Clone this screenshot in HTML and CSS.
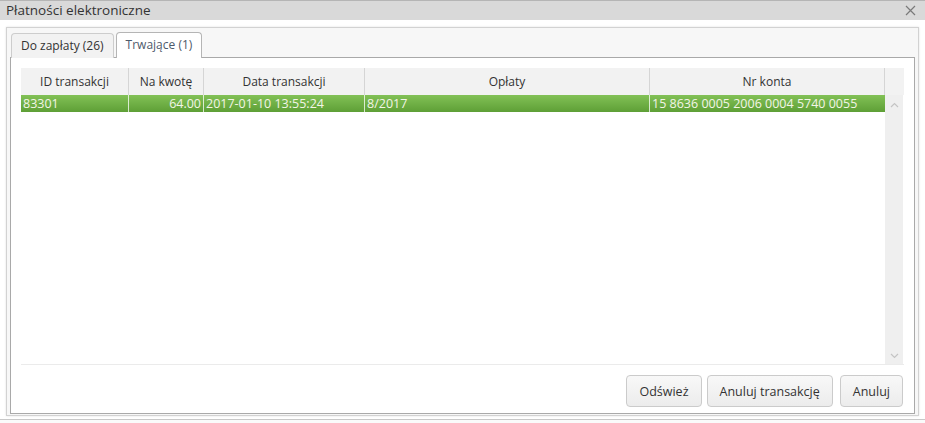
FILE: index.html
```html
<!DOCTYPE html>
<html lang="pl">
<head>
<meta charset="utf-8">
<title>Płatności elektroniczne</title>
<link rel="stylesheet" href="styles.css">
</head>
<body>
<div class="window">
  <div class="titlebar">
    <span class="title">Płatności elektroniczne</span>
    <svg class="close" width="11" height="11" viewBox="0 0 11 11"><path d="M1 1L10 10M10 1L1 10" stroke="#7a7a7a" stroke-width="1.2" fill="none"/></svg>
  </div>
  <div class="panel">
    <div class="tabs">
      <div class="tab">Do zapłaty (26)</div>
      <div class="tab active">Trwające (1)</div>
    </div>
    <div class="tabbody">
      <div class="grid">
        <div class="ghead">
          <div class="hc c1">ID transakcji</div>
          <div class="hc c2">Na kwotę</div>
          <div class="hc c3">Data transakcji</div>
          <div class="hc c4">Opłaty</div>
          <div class="hc c5">Nr konta</div>
          <div class="hc c6"></div>
        </div>
        <div class="gbody">
          <div class="rows">
            <div class="row sel">
              <div class="cell c1">83301</div>
              <div class="cell c2 num">64.00</div>
              <div class="cell c3">2017-01-10 13:55:24</div>
              <div class="cell c4">8/2017</div>
              <div class="cell c5">15 8636 0005 2006 0004 5740 0055</div>
            </div>
          </div>
          <div class="scroll">
            <svg width="9" height="6" viewBox="0 0 9 6"><path d="M1 5L4.5 1.5L8 5" stroke="#c4c4c4" stroke-width="1.2" fill="none"/></svg>
            <svg width="9" height="6" viewBox="0 0 9 6"><path d="M1 1L4.5 4.5L8 1" stroke="#c4c4c4" stroke-width="1.2" fill="none"/></svg>
          </div>
        </div>
      </div>
      <div class="buttons">
        <button class="btn">Odśwież</button>
        <button class="btn">Anuluj transakcję</button>
        <button class="btn">Anuluj</button>
      </div>
    </div>
  </div>
</div>
</body>
</html>
```
FILE: styles.css
```css
html, body {
  margin: 0;
  padding: 0;
}
body {
  width: 925px;
  height: 423px;
  overflow: hidden;
  background: #fafafa;
  font-family: "Open Sans", "Liberation Sans", sans-serif;
  color: #333;
}
.window {
  height: 419px;
  background: #fff;
  display: flex;
  flex-direction: column;
  border-bottom: 1px solid #c8c8c8;
}
.titlebar {
  height: 19px;
  background: #d9d9d9;
  border-top: 1px solid #b5b5b5;
  display: flex;
  align-items: center;
  justify-content: space-between;
  padding: 0 9px 0 6px;
}
.title {
  font-size: 13.5px;
  color: #333;
  line-height: 19px;
}
.close {
  display: block;
}
.panel {
  margin: 7px 6px 4px 6px;
  flex: 1;
  border: 1px solid #d2d2d2;
  box-shadow: 0 0 2px rgba(0,0,0,0.12);
  background: #f7f7f7;
  display: flex;
  flex-direction: column;
  padding: 0 3px 1px 3px;
}
.tabs {
  height: 29px;
  display: flex;
  align-items: flex-end;
  gap: 2px;
  padding-left: 1px;
}
.tab {
  height: 24px;
  line-height: 24px;
  padding: 0 9px;
  font-size: 12px;
  color: #333;
  background: #f2f2f2;
  border: 1px solid #cdcdcd;
  border-bottom: none;
  border-radius: 4px 4px 0 0;
  position: relative;
  top: 1px;
}
.tab.active {
  background: #fff;
  border-color: #b5b5b5;
  color: #4d5a6b;
  height: 25px;
  z-index: 1;
}
.tabbody {
  flex: 1;
  background: #fff;
  border: 1px solid #a9a9a9;
  display: flex;
  flex-direction: column;
  padding: 10px 10px 6px 10px;
}
.grid {
  height: 296px;
  display: flex;
  flex-direction: column;
  border-bottom: 1px solid #ebebeb;
}
.ghead {
  height: 27px;
  display: flex;
  background: #f2f2f2;
}
.hc {
  font-size: 12px;
  line-height: 27px;
  text-align: center;
  border-right: 1px solid #d5d5d5;
  color: #333;
  box-sizing: border-box;
}
.hc.c6 { border-right: none; }
.c1 { width: 108px; }
.c2 { width: 75px; }
.c3 { width: 161px; }
.c4 { width: 285px; }
.c5 { width: 235px; }
.c6 { width: 18px; }
.gbody {
  flex: 1;
  display: flex;
}
.rows {
  width: 864px;
}
.row {
  height: 17px;
  display: flex;
}
.row.sel {
  background: linear-gradient(#82c156, #5e9f36);
}
.cell {
  font-size: 12.5px;
  line-height: 17px;
  color: #f3f5e6;
  padding: 0 2px 0 2px;
  box-sizing: border-box;
  border-right: 1px solid rgba(255,255,255,0.75);
  white-space: nowrap;
  overflow: hidden;
}
.cell.c5 { border-right: none; }
.num { text-align: right; }
.scroll {
  width: 18px;
  background: #efefef;
  display: flex;
  flex-direction: column;
  justify-content: space-between;
  align-items: center;
  padding: 7px 0 5px 0;
}
.scroll svg { display: block; }
.buttons {
  margin-top: 10px;
  display: flex;
  justify-content: flex-end;
  gap: 5px;
  padding-right: 1px;
}
.btn {
  height: 32px;
  padding: 0 12px;
  font-family: "Open Sans", "Liberation Sans", sans-serif;
  font-size: 12.5px;
  color: #333;
  background: linear-gradient(#f8f8f8, #ececec);
  border: 1px solid #cbcbcb;
  border-radius: 4px;
}
.btn:last-child { margin-left: 2px; }
```
